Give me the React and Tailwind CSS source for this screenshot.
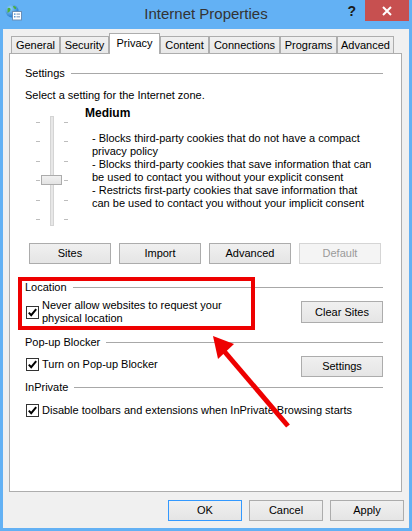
import React from "react";

const tabs = [
  { label: "General", w: "w-[49px]" },
  { label: "Security", w: "w-[49px]" },
  { label: "Privacy", w: "w-[51px]", active: true },
  { label: "Content", w: "w-[49px]" },
  { label: "Connections", w: "w-[71px]" },
  { label: "Programs", w: "w-[57px]" },
  { label: "Advanced", w: "w-[57px]" },
];

const Checkbox = () => (
  <svg width="13" height="13" viewBox="0 0 13 13" className="shrink-0">
    <rect x="0.5" y="0.5" width="12" height="12" fill="#fff" stroke="#333" />
    <path d="M2.8 6.6 L5.2 9.2 L10.2 3.2" fill="none" stroke="#000" strokeWidth="2" />
  </svg>
);

const Button = ({ children, className = "", disabled, focused }) => (
  <button
    className={
      "h-[21px] border text-[11px] leading-none " +
      (disabled
        ? "border-[#d5d5d5] bg-[#f4f4f4] text-[#9a9a9a] "
        : focused
        ? "border-[#3399ff] bg-gradient-to-b from-[#f0f0f0] to-[#e5e5e5] text-black "
        : "border-[#acacac] bg-gradient-to-b from-[#f0f0f0] to-[#e5e5e5] text-black ") +
      className
    }
  >
    {children}
  </button>
);

const GroupHeader = ({ children }) => (
  <div className="flex items-center h-[14px] leading-[14px]">
    <span>{children}</span>
    <div className="flex-1 h-px bg-[#a8a8a8] ml-[6px]" />
  </div>
);

const Slider = () => (
  <svg width="34" height="110" viewBox="0 0 34 110" className="shrink-0">
    <rect x="14.5" y="0.5" width="3" height="109" fill="#e7e7e7" stroke="#d4d4d4" />
    {[6, 25, 45, 64, 84, 103].map((y) => (
      <g key={y}>
        <rect x="0" y={y} width="4" height="1" fill="#bdbdbd" />
        <rect x="28" y={y} width="4" height="1" fill="#bdbdbd" />
      </g>
    ))}
    <defs>
      <linearGradient id="thumb" x1="0" y1="0" x2="0" y2="1">
        <stop offset="0" stopColor="#f2f2f2" />
        <stop offset="1" stopColor="#e2e2e2" />
      </linearGradient>
    </defs>
    <rect x="5.5" y="59.5" width="20" height="9" fill="url(#thumb)" stroke="#acacac" />
  </svg>
);

const TitleIcon = () => (
  <svg width="17" height="17" viewBox="0 0 17 17">
    <defs>
      <radialGradient id="globe" cx="0.35" cy="0.3" r="0.8">
        <stop offset="0" stopColor="#8fd3ff" />
        <stop offset="1" stopColor="#1b6fc4" />
      </radialGradient>
    </defs>
    <circle cx="7" cy="7" r="6.5" fill="url(#globe)" />
    <path d="M2.5 4.5 C4 3 6 4 5.5 6 C5 8 3 8 2.5 9 Z" fill="#4caf3c" />
    <path d="M8 2 C10 1.5 12 3 11 5 C9.5 5.5 8.5 4 8 2 Z" fill="#4caf3c" />
    <rect x="7.5" y="7.5" width="9" height="8.5" fill="#fff" stroke="#6a8fb8" />
    <rect x="9" y="9.5" width="1.5" height="1.2" fill="#2f7fd0" />
    <rect x="11.5" y="9.5" width="3.5" height="1.2" fill="#8aa4c4" />
    <rect x="9" y="12.2" width="1.5" height="1.2" fill="#2f7fd0" />
    <rect x="11.5" y="12.2" width="3.5" height="1.2" fill="#8aa4c4" />
  </svg>
);

export default function App() {
  return (
    <div className="relative w-[412px] h-[531px] bg-[#63b1f4] flex flex-col font-['Liberation_Sans',Arial,sans-serif] text-[11px] text-black overflow-hidden">
      {/* title bar */}
      <div className="h-[29px] grid grid-cols-[1fr_auto_1fr] shrink-0">
        <div className="pl-[5px] pt-[4px]">
          <TitleIcon />
        </div>
        <div className="text-[15px] text-[#333] leading-[29px] -mt-[1px]">Internet Properties</div>
        <div className="flex justify-end items-start pr-[3px]">
          <span className="text-[14px] font-bold text-[#1a1a1a] leading-[22px] mr-[9px]">?</span>
          <div className="w-[44px] h-[21px] bg-[#c75050] flex items-center justify-center">
            <svg width="10" height="10" viewBox="0 0 10 10">
              <path d="M1 1 L9 9 M9 1 L1 9" stroke="#fff" strokeWidth="2" />
            </svg>
          </div>
        </div>
      </div>

      {/* dialog body */}
      <div className="flex-1 mx-[3px] mb-[3px] bg-[#f0f0f0] flex flex-col pt-[4px] pb-[7px]">
        <div className="flex items-end ml-[8px] h-[21px] relative z-10">
          {tabs.map((t) =>
            t.active ? (
              <div
                key={t.label}
                className={`${t.w} h-[21px] bg-white border border-b-0 border-[#adadad] text-center leading-[18px]`}
              >
                {t.label}
              </div>
            ) : (
              <div
                key={t.label}
                className={`${t.w} h-[18px] bg-gradient-to-b from-[#f0f0f0] to-[#e8e8e8] border border-[#adadad] text-center leading-[17px]`}
              >
                {t.label}
              </div>
            )
          )}
        </div>

        <div className="flex-1 -mt-px ml-[6px] mr-[7px] bg-white border border-[#adadad] pl-[15px] pr-[18px] flex flex-col">
          <div className="mt-[12px]">
            <GroupHeader>Settings</GroupHeader>
          </div>
          <div className="mt-[8px] h-[14px] leading-[14px]">Select a setting for the Internet zone.</div>

          <div className="mt-[4px] flex">
            <div className="ml-[11px] mt-[10px]">
              <Slider />
            </div>
            <div className="ml-[15px] flex flex-col">
              <div className="font-bold h-[14px] leading-[14px] text-[12px]">Medium</div>
              <div className="mt-[12px] pl-[7px] leading-[13px] whitespace-nowrap">
                - Blocks third-party cookies that do not have a compact
                <br />
                privacy policy
                <br />
                - Blocks third-party cookies that save information that can
                <br />
                be used to contact you without your explicit consent
                <br />
                - Restricts first-party cookies that save information that
                <br />
                can be used to contact you without your implicit consent
              </div>
            </div>
          </div>

          <div className="mt-[17px] ml-[4px] flex gap-[8px]">
            <Button className="w-[82px]">Sites</Button>
            <Button className="w-[82px]">Import</Button>
            <Button className="w-[82px]">Advanced</Button>
            <Button className="w-[82px]" disabled>
              Default
            </Button>
          </div>

          <div className="mt-[16px]">
            <GroupHeader>Location</GroupHeader>
          </div>
          <div className="mt-[5px] h-[26px] flex items-center justify-between">
            <div className="flex items-center ml-[1px]">
              <Checkbox />
              <div className="ml-[3px] leading-[13px]">
                Never allow websites to request your
                <br />
                physical location
              </div>
            </div>
            <Button className="w-[82px] h-[22px]">Clear Sites</Button>
          </div>

          <div className="mt-[10px]">
            <GroupHeader>Pop-up Blocker</GroupHeader>
          </div>
          <div className="mt-[7px] h-[21px] flex items-start justify-between">
            <div className="flex items-center ml-[1px] mt-[1px]">
              <Checkbox />
              <span className="ml-[3px] leading-[14px]">Turn on Pop-up Blocker</span>
            </div>
            <Button className="w-[82px]">Settings</Button>
          </div>

          <div className="mt-[3px]">
            <GroupHeader>InPrivate</GroupHeader>
          </div>
          <div className="mt-[9px] h-[14px] flex items-center ml-[1px]">
            <Checkbox />
            <span className="ml-[3px] leading-[14px]">Disable toolbars and extensions when InPrivate Browsing starts</span>
          </div>
        </div>

        <div className="mt-[8px] flex justify-end gap-[7px] pr-[5px]">
          <Button className="w-[74px]" focused>
            OK
          </Button>
          <Button className="w-[74px]">Cancel</Button>
          <Button className="w-[74px]">Apply</Button>
        </div>
      </div>

      {/* annotation overlays */}
      <div className="absolute left-[18px] top-[277px] w-[237px] h-[53px] border-[4px] border-[#ee0000]" />
      <svg className="absolute left-0 top-0 pointer-events-none" width="412" height="531">
        <line x1="288" y1="426" x2="224" y2="351" stroke="#ee0000" strokeWidth="5" />
        <polygon points="213,336 234,344 218,359" fill="#ee0000" />
      </svg>
    </div>
  );
}
